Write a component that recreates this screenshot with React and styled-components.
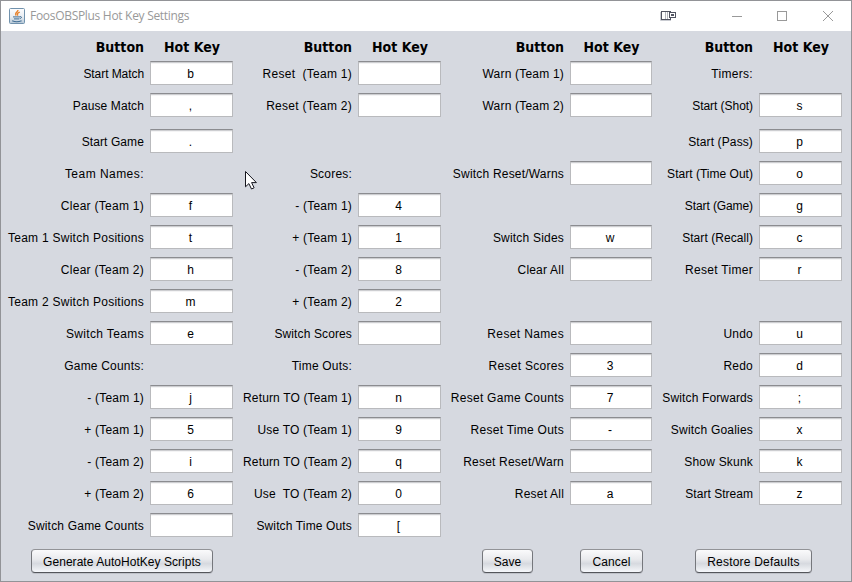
import React from "react";
import styled, { createGlobalStyle } from "styled-components";

const GlobalStyle = createGlobalStyle`
  *, *::before, *::after { box-sizing: border-box; }
  body { margin: 0; overflow: hidden; background: #d6d9e0; }
`;

const Window = styled.div`
  position: relative;
  display: flex;
  flex-direction: column;
  width: 852px;
  height: 582px;
  border: 1px solid #929397;
  background: #d6d9e0;
  font-family: "Liberation Sans", Arial, sans-serif;
  font-size: 12px;
  color: #000;
`;

const TitleBar = styled.header`
  display: flex;
  align-items: center;
  flex: none;
  height: 30px;
  padding-left: 8px;
  background: #fff;
`;

const Title = styled.h1`
  flex: 1;
  margin: 0 0 0 5px;
  font: 400 12px/20px "Open Sans", "Segoe UI", sans-serif;
  letter-spacing: -0.3px;
  color: #999;
`;

const Controls = styled.div`
  display: flex;
  align-items: center;
`;

const ControlIcon = styled.svg`
  display: block;
  flex: none;
  margin-right: ${(p) => p.$gap}px;
`;

const Columns = styled.main`
  display: grid;
  grid-template-columns: 232px 208px 211px 190px;
  flex: none;
  height: 518px;
`;

const Column = styled.section`
  display: flex;
  flex-direction: column;
`;

const HeadRow = styled.div`
  display: grid;
  grid-template-columns: 1fr ${(p) => p.$field}px;
  column-gap: 6px;
  height: 30px;
  font: 700 14px/32px "DejaVu Sans Condensed", "DejaVu Sans", Tahoma, sans-serif;
  font-stretch: condensed;
  white-space: nowrap;
`;

const HeadLabel = styled.span`
  text-align: right;
`;

const HeadKey = styled.span`
  padding-left: 1px;
  text-align: center;
`;

const Row = styled.div`
  display: grid;
  grid-template-columns: 1fr ${(p) => p.$field}px;
  column-gap: 6px;
  height: ${(p) => (p.$tall ? 36 : 32)}px;
`;

const Label = styled.label`
  height: 24px;
  line-height: 26px;
  letter-spacing: ${(p) => p.$spacing}px;
  text-align: right;
  white-space: pre;
`;

const Field = styled.input`
  width: 100%;
  height: 24px;
  margin: 0;
  padding: 2px 2px 0 0;
  border: 1px solid #b9babd;
  border-top-color: #8b8c90;
  border-radius: 0;
  outline: 0;
  background: #fff;
  box-shadow: inset 0 1px #cdced1, inset 0 2px #f4f4f5;
  font: inherit;
  color: inherit;
  text-align: center;
`;

const Footer = styled.footer`
  display: flex;
  flex: none;
  height: 24px;
  padding: 0 39px 0 30px;
`;

const Button = styled.button`
  flex: none;
  width: ${(p) => p.$width}px;
  height: 24px;
  margin-left: ${(p) => p.$gap || 0}px;
  padding: 1px 0 0;
  border: 1px solid #75777c;
  border-top-color: #929397;
  border-bottom-color: #54565b;
  border-radius: 4px;
  background: linear-gradient(#fafafb 0%, #e9eaed 42%, #d6d9df 62%, #e9ebef 85%, #f6f8fc 100%);
  box-shadow: 0 1px #bfc2c9;
  font: inherit;
  letter-spacing: ${(p) => p.$spacing}px;
  color: inherit;
  white-space: nowrap;
`;

const Pointer = styled.svg`
  position: absolute;
  left: 243px;
  top: 169px;
`;

const columns = [
  {
    field: 83,
    rows: [
      ["Start Match", "b"], ["Pause Match", ","], ["Start Game", "."], ["Team Names:"],
      ["Clear (Team 1)", "f"], ["Team 1 Switch Positions", "t"], ["Clear (Team 2)", "h"],
      ["Team 2 Switch Positions", "m"], ["Switch Teams", "e"], ["Game Counts:"],
      ["- (Team 1)", "j"], ["+ (Team 1)", "5"], ["- (Team 2)", "i"], ["+ (Team 2)", "6"],
      ["Switch Game Counts", ""],
    ],
  },
  {
    field: 83,
    rows: [
      ["Reset  (Team 1)", ""], ["Reset (Team 2)", ""], [], ["Scores:"],
      ["- (Team 1)", "4"], ["+ (Team 1)", "1"], ["- (Team 2)", "8"], ["+ (Team 2)", "2"],
      ["Switch Scores", ""], ["Time Outs:"], ["Return TO (Team 1)", "n"],
      ["Use TO (Team 1)", "9"], ["Return TO (Team 2)", "q"], ["Use  TO (Team 2)", "0"],
      ["Switch Time Outs", "["],
    ],
  },
  {
    field: 82,
    rows: [
      ["Warn (Team 1)", ""], ["Warn (Team 2)", ""], [], ["Switch Reset/Warns", ""], [],
      ["Switch Sides", "w"], ["Clear All", ""], [], ["Reset Names", ""],
      ["Reset Scores", "3"], ["Reset Game Counts", "7"], ["Reset Time Outs", "-"],
      ["Reset Reset/Warn", ""], ["Reset All", "a"], [],
    ],
  },
  {
    field: 83,
    rows: [
      ["Timers:"], ["Start (Shot)", "s"], ["Start (Pass)", "p"], ["Start (Time Out)", "o"],
      ["Start (Game)", "g"], ["Start (Recall)", "c"], ["Reset Timer", "r"], [],
      ["Undo", "u"], ["Redo", "d"], ["Switch Forwards", ";"], ["Switch Goalies", "x"],
      ["Show Skunk", "k"], ["Start Stream", "z"], [],
    ],
  },
];

// Letter spacing of the labels that differ from the common 0.2px.
const tracking = {
  "Start Match": -0.07,
  "Pause Match": 0.1,
  "Start Game": 0.1,
  "Team Names:": 0.46,
  "Clear (Team 1)": 0.27,
  "Clear (Team 2)": 0.27,
  "Team 1 Switch Positions": 0.26,
  "Team 2 Switch Positions": 0.26,
  "Switch Teams": 0.36,
  "Reset  (Team 1)": 0.27,
  "Reset (Team 2)": 0.27,
  "Switch Scores": 0.12,
  "Switch Time Outs": 0.14,
  "Return TO (Team 1)": 0.15,
  "Return TO (Team 2)": 0.15,
  "Reset Names": 0.36,
  "Reset Scores": 0.28,
  "Reset Game Counts": 0.26,
  "Reset Time Outs": 0.27,
  "Timers:": 0.3,
  "Start (Shot)": -0.05,
  "Start (Pass)": 0.12,
  "Start (Time Out)": 0.02,
  "Start (Game)": -0.1,
  "Start (Recall)": 0.06,
  "Reset Timer": 0.3,
  "Switch Forwards": 0.13,
  "Start Stream": 0.03,
};

function JavaIcon() {
  return (
    <svg width="16" height="16" viewBox="0 0 16 16" fill="none">
      <defs>
        <linearGradient id="javaTile" x1="0" y1="0" x2="0" y2="1">
          <stop offset="0" stopColor="#fdfdfe" />
          <stop offset="0.55" stopColor="#e9edf2" />
          <stop offset="1" stopColor="#b4c6d5" />
        </linearGradient>
      </defs>
      <rect x="0.5" y="0.5" width="15" height="15" rx="1" fill="url(#javaTile)" stroke="#7192ad" />
      <path d="M9 2C9.2 4 5 4.6 7.2 7.6M10.8 4.2C8.2 5 8 6 8.9 7.6" stroke="#e8822c" strokeWidth="1.3" />
      <path d="M4 8.9h7M5 10.9h5M11 8.7c2.2-.5 1.9 1.7-.4 2" stroke="#426e94" />
      <path d="M3.2 12.7c2.3 1.1 6.8 1.1 9.4 0" stroke="#426e94" strokeWidth="1.1" />
    </svg>
  );
}

function WindowControls() {
  return (
    <Controls>
      <ControlIcon $gap={56} width="16" height="12" viewBox="0 0 16 12" fill="none">
        <path d="M0.5 2V10.5H11" stroke="#c9cbd1" />
        <rect x="1.5" y="1.5" width="9" height="8" fill="#fff" stroke="#515461" />
        <path d="M5.5 2v7M7.5 2v7" stroke="#b5b7be" />
        <rect x="9.5" y="2.5" width="6" height="5" fill="#fff" stroke="#515461" />
        <rect x="11" y="4" width="3" height="2" fill="#515461" />
      </ControlIcon>
      <ControlIcon $gap={35} width="10" height="11" viewBox="0 0 10 11">
        <path d="M0 5.5h10" stroke="#999" />
      </ControlIcon>
      <ControlIcon $gap={36} width="10" height="10" viewBox="0 0 10 10" fill="none">
        <rect x="0.5" y="0.5" width="9" height="9" stroke="#999" />
      </ControlIcon>
      <ControlIcon $gap={18} width="10" height="10" viewBox="0 0 10 10" fill="none">
        <path d="M0 0l10 10M10 0L0 10" stroke="#999" />
      </ControlIcon>
    </Controls>
  );
}

function KeyColumn({ field, rows }) {
  return (
    <Column>
      <HeadRow $field={field}>
        <HeadLabel>Button</HeadLabel>
        <HeadKey>Hot Key</HeadKey>
      </HeadRow>
      {rows.map(([label, key], i) => (
        <Row key={i} $field={field} $tall={i === 1}>
          <Label $spacing={tracking[label] ?? 0.2}>{label}</Label>
          {key !== undefined && <Field defaultValue={key} aria-label={label} />}
        </Row>
      ))}
    </Column>
  );
}

export default function App() {
  return (
    <Window>
      <GlobalStyle />
      <TitleBar>
        <JavaIcon />
        <Title>FoosOBSPlus Hot Key Settings</Title>
        <WindowControls />
      </TitleBar>
      <Columns>
        {columns.map((column, i) => <KeyColumn key={i} {...column} />)}
      </Columns>
      <Footer>
        <Button $width={182} $spacing={0.04}>Generate AutoHotKey Scripts</Button>
        <Button $width={51} $gap={269} $spacing={0}>Save</Button>
        <Button $width={63} $gap={47} $spacing={0.1}>Cancel</Button>
        <Button $width={117} $gap={52} $spacing={0.2}>Restore Defaults</Button>
      </Footer>
      <Pointer width="13" height="20" viewBox="0 0 13 20">
        <path d="M1.5 1.5v15.3l3.4-3.2 2.6 5.4 2.6-1.2-2.5-5.2h4.8z" fill="#fff" stroke="#15151d" />
      </Pointer>
    </Window>
  );
}
